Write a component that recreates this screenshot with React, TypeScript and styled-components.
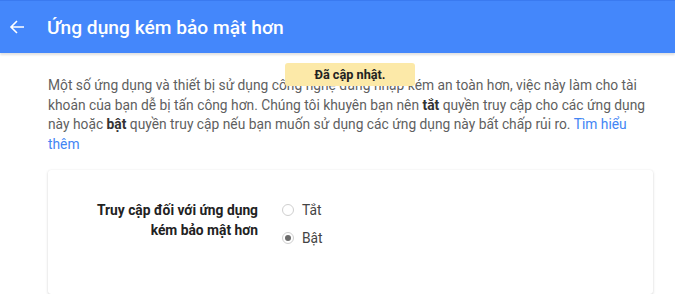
import React from 'react';
import styled, {createGlobalStyle} from 'styled-components';

const GlobalStyle = createGlobalStyle`
  html, body {
    margin: 0;
    padding: 0;
    background: #fff;
    font-family: Roboto, "Liberation Sans", Arial, sans-serif;
  }
`

const Header = styled.header`
  height: 53px;
  background: #4487fb;
  border-top: 1px solid #3a7af0;
  box-sizing: border-box;
  display: flex;
  align-items: center;
  box-shadow: 0 2px 2px rgba(0, 0, 0, 0.12);
  position: relative;
  z-index: 1;
`

const BackButton = styled.button`
  width: 47px;
  height: 100%;
  padding: 0 0 0 9px;
  border: none;
  background: transparent;
  display: flex;
  align-items: center;
  cursor: pointer;
`

const Title = styled.h1`
  margin: 0;
  color: #fff;
  font-size: 19.2px;
  font-weight: 500;
`

const Main = styled.main`
  position: relative;
  padding: 23px 22px 0 48px;
`

const Intro = styled.p`
  margin: 0;
  font-size: 13.8px;
  line-height: 19.5px;
  color: #5f5f5f;
  b {
    color: #333;
    font-weight: 700;
  }
`

const LearnMore = styled.a`
  color: #4285f4;
  text-decoration: none;
`

const Toast = styled.div`
  position: absolute;
  top: 10px;
  left: 285px;
  width: 130px;
  height: 23px;
  border-radius: 3px;
  background: #fce9a8;
  display: flex;
  align-items: center;
  justify-content: center;
  font-size: 12.7px;
  font-weight: 700;
  color: #222;
`

const Card = styled.section`
  margin-top: 16px;
  width: 605px;
  padding: 30px 0 46px;
  box-sizing: border-box;
  border-radius: 3px;
  background: #fff;
  box-shadow: 0 1px 3px rgba(0, 0, 0, 0.16), 0 0 1px rgba(0, 0, 0, 0.08);
  display: grid;
  grid-template-columns: 210px 1fr;
  column-gap: 24px;
`

const SettingLabel = styled.div`
  text-align: right;
  font-size: 13.8px;
  line-height: 20px;
  font-weight: 700;
  color: #222;
`

const Options = styled.div`
  display: flex;
  flex-direction: column;
  gap: 8px;
`

const Option = styled.label`
  display: flex;
  align-items: center;
  gap: 8px;
  height: 20px;
  font-size: 13.8px;
  color: #444;
  cursor: pointer;
`

const RadioDot = styled.span<{ checked?: boolean }>`
  width: 12px;
  height: 12px;
  box-sizing: border-box;
  border-radius: 50%;
  border: 1px solid #cfcfcf;
  background: #fff;
  display: flex;
  align-items: center;
  justify-content: center;
  &::after {
    content: '';
    width: 6px;
    height: 6px;
    border-radius: 50%;
    background: ${props => props.checked ? '#6b6b6b' : 'transparent'};
  }
`

const App: React.FC = () => {
  const [access, setAccess] = React.useState('on');

  return (
    <>
      <GlobalStyle />
      <Header>
        <BackButton aria-label="Quay lại">
          <svg width="16" height="16" viewBox="0 0 16 16" fill="none">
            <path d="M15 8H2M8 2L2 8l6 6" stroke="#fff" strokeWidth="1.6" />
          </svg>
        </BackButton>
        <Title>Ứng dụng kém bảo mật hơn</Title>
      </Header>
      <Main>
        <Toast>Đã cập nhật.</Toast>
        <Intro>
          Một số ứng dụng và thiết bị sử dụng công nghệ đăng nhập kém an toàn hơn, việc này làm cho tài
          khoản của bạn dễ bị tấn công hơn. Chúng tôi khuyên bạn nên <b>tắt</b> quyền truy cập cho các ứng dụng
          này hoặc <b>bật</b> quyền truy cập nếu bạn muốn sử dụng các ứng dụng này bất chấp rủi ro.{' '}
          <LearnMore href="#">Tìm hiểu thêm</LearnMore>
        </Intro>
        <Card>
          <SettingLabel>
            Truy cập đối với ứng dụng
            <br />
            kém bảo mật hơn
          </SettingLabel>
          <Options>
            <Option onClick={() => setAccess('off')}>
              <RadioDot checked={access === 'off'} />
              Tắt
            </Option>
            <Option onClick={() => setAccess('on')}>
              <RadioDot checked={access === 'on'} />
              Bật
            </Option>
          </Options>
        </Card>
      </Main>
    </>
  );
};

export default App;
